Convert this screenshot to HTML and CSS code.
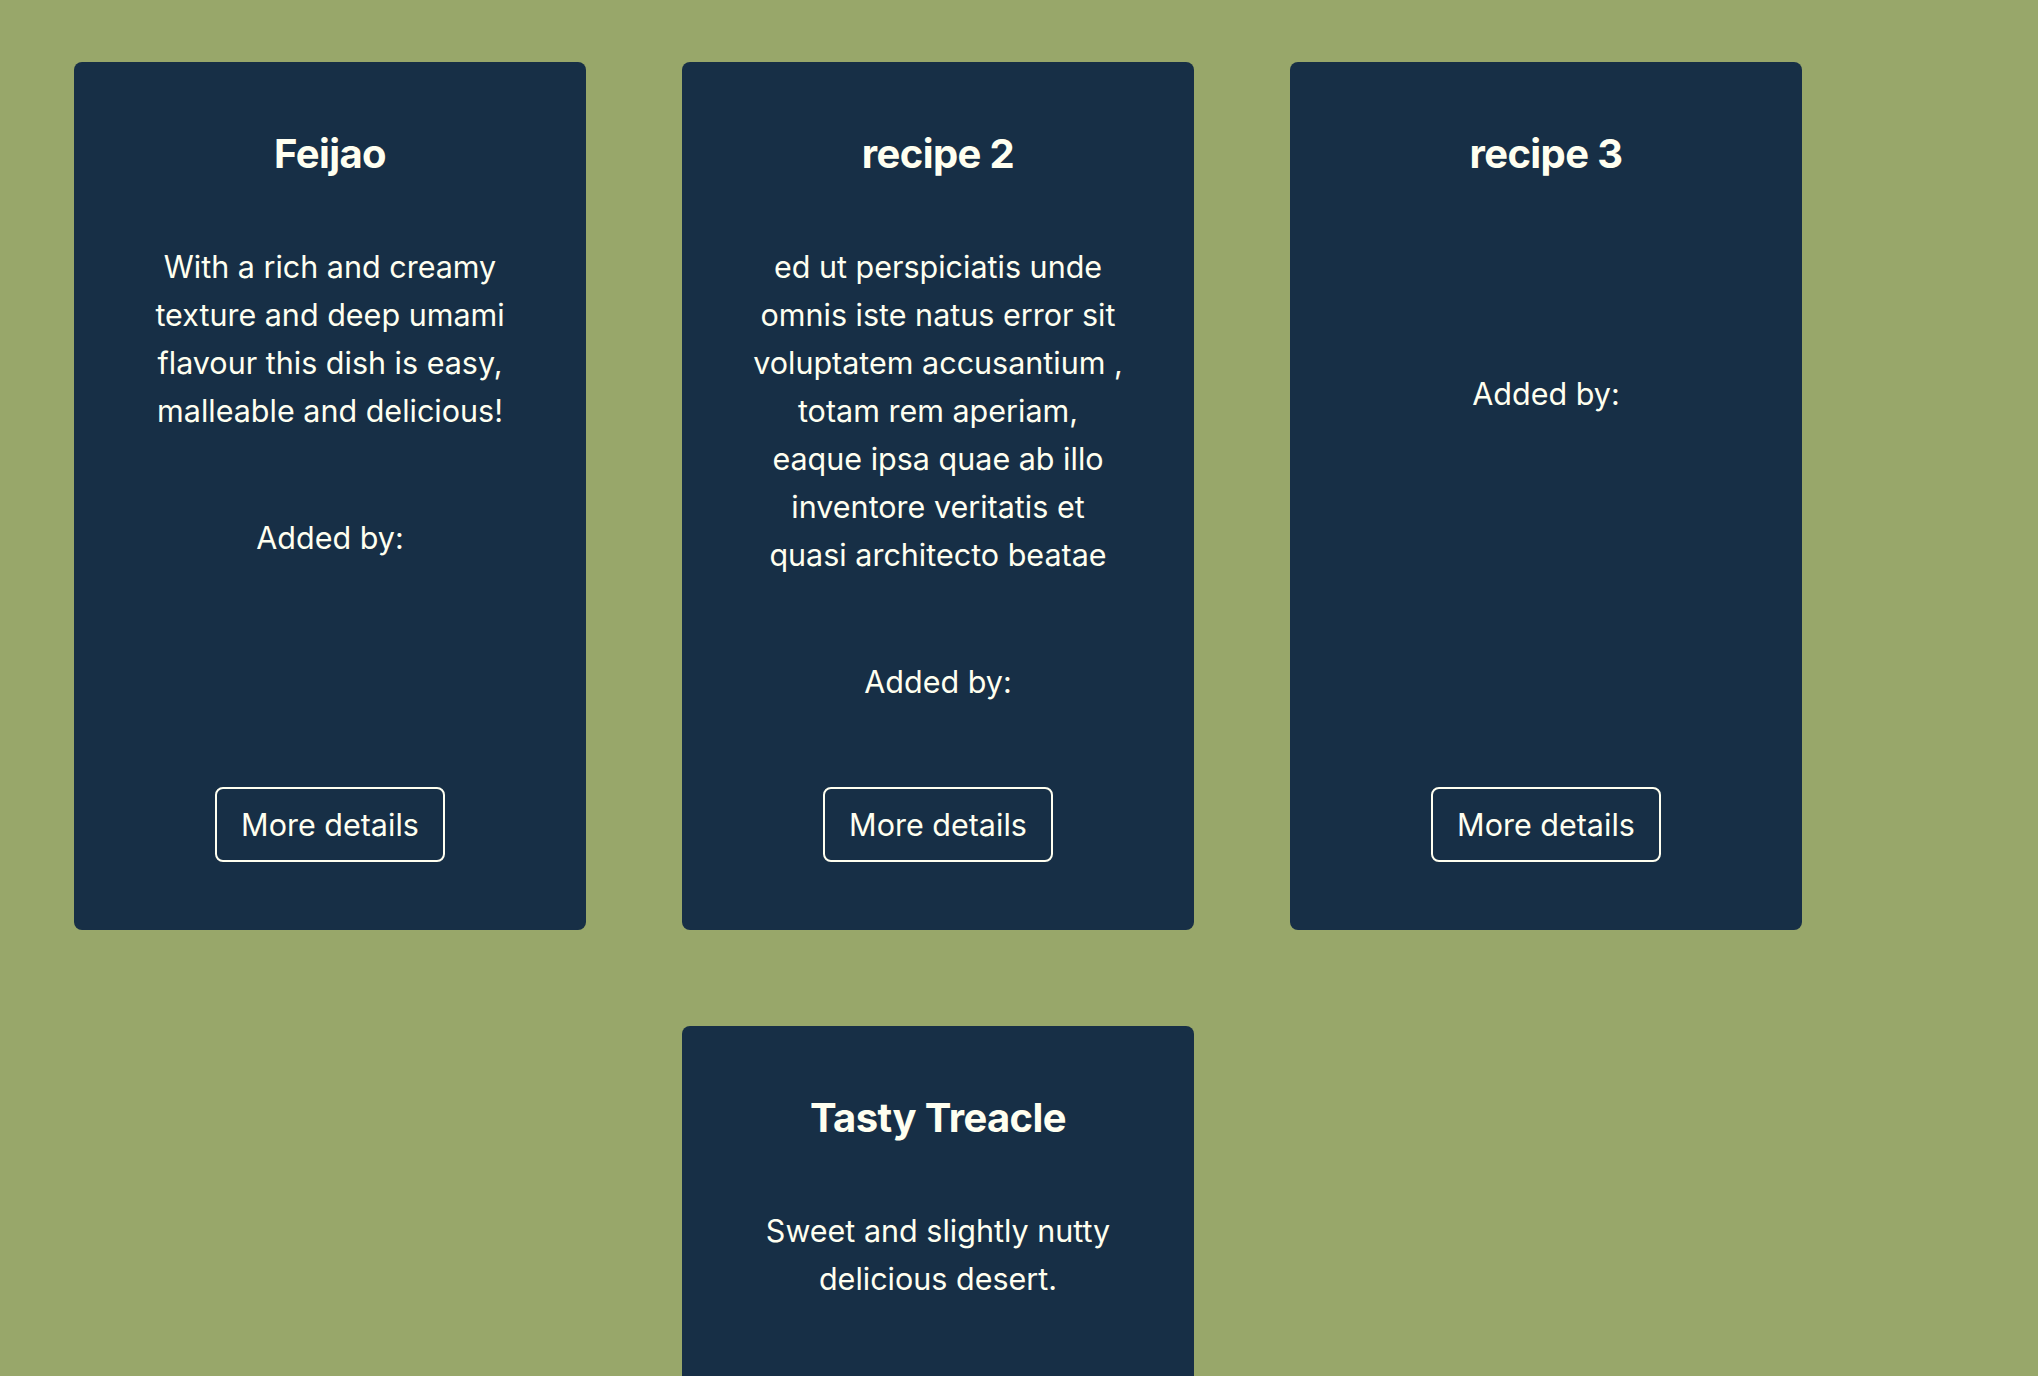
FILE: index.html
```html
<!DOCTYPE html>
<html lang="en">
<head>
<meta charset="utf-8">
<title>Recipes</title>
<link rel="stylesheet" href="styles.css">
</head>
<body>
<main class="recipes">
  <article class="card">
    <h2 class="card-title">Feijao</h2>
    <p class="card-desc">With a rich and creamy texture and deep umami flavour this dish is easy, malleable and delicious!</p>
    <p class="card-author">Added by:</p>
    <button class="card-btn">More details</button>
  </article>
  <article class="card">
    <h2 class="card-title">recipe 2</h2>
    <p class="card-desc">ed ut perspiciatis unde omnis iste natus error sit voluptatem accusantium , totam rem aperiam, eaque ipsa quae ab illo inventore veritatis et quasi architecto beatae</p>
    <p class="card-author">Added by:</p>
    <button class="card-btn">More details</button>
  </article>
  <article class="card">
    <h2 class="card-title">recipe 3</h2>
    <p class="card-desc"></p>
    <p class="card-author">Added by:</p>
    <button class="card-btn">More details</button>
  </article>
  <article class="card">
    <h2 class="card-title">Tasty Treacle</h2>
    <p class="card-desc">Sweet and slightly nutty delicious desert.</p>
    <p class="card-author">Added by:</p>
    <button class="card-btn">More details</button>
  </article>
</main>
</body>
</html>
```
FILE: styles.css
```css
html, body {
  margin: 0;
  padding: 0;
}
body {
  background: #98a76a;
  font-family: Inter, "Noto Sans", sans-serif;
  color: #fffff0;
}
.recipes {
  width: 1728px;
  padding: 62px 0 0 74px;
  display: flex;
  flex-wrap: wrap;
  justify-content: center;
  gap: 96px;
}
.card {
  width: 512px;
  box-sizing: border-box;
  background: #172f46;
  border-radius: 8px;
  padding: 0 69px 68px;
  display: flex;
  flex-direction: column;
  align-items: center;
  text-align: center;
}
.card-title {
  margin: 68px 0 0;
  font-size: 40px;
  line-height: 48px;
  font-weight: 700;
  letter-spacing: -0.6px;
}
.card-desc {
  margin: 65px 0 0;
  font-size: 30.5px;
  line-height: 48px;
  min-height: 48px;
}
.card-author {
  margin: 79px 0 81px;
  font-size: 30.5px;
  line-height: 48px;
}
.card-btn {
  margin-top: auto;
  height: 75px;
  padding: 0 24px;
  background: transparent;
  color: #fffff0;
  border: 2px solid #fffff0;
  border-radius: 8px;
  font-family: inherit;
  font-size: 30.5px;
  white-space: nowrap;
}
```
